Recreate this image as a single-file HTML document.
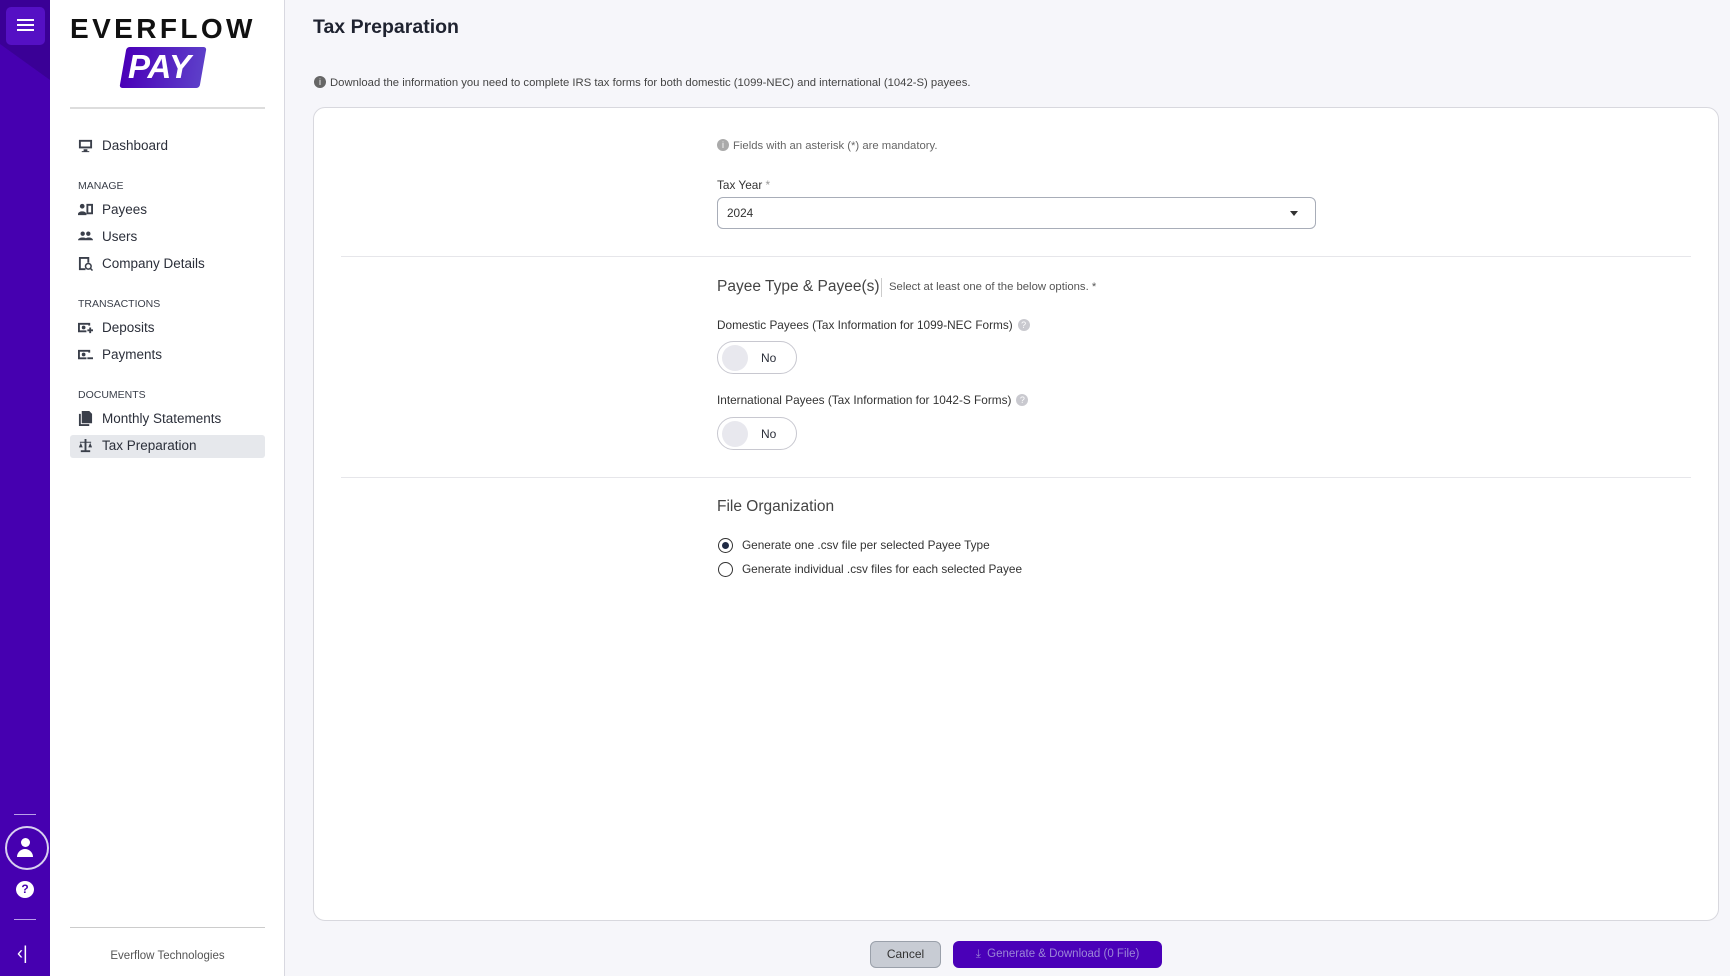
<!DOCTYPE html>
<html><head><meta charset="utf-8"><style>
*{box-sizing:border-box;margin:0;padding:0}
body{width:1730px;height:976px;overflow:hidden;background:#f6f6fa;font-family:"Liberation Sans",sans-serif;color:#2b2f3a;position:relative}
.abs{position:absolute}
.rail{left:0;top:0;width:50px;height:976px;background:#4600b0;overflow:hidden}
.side{left:50px;top:0;width:235px;height:976px;background:#fff;border-right:1px solid #d8d8e0}
.nav{position:absolute;left:52px;font-size:13.5px;color:#2b2f3a;display:flex;align-items:center}
.nav svg{width:15px;height:15px;margin-right:9px;fill:#3a3f4a}
.sec{position:absolute;left:28px;font-size:10.5px;color:#3a3f4a}
.t{font-size:11.8px;color:#333}
.tog{width:80px;height:33px;border:1px solid #c8c8d0;border-radius:17px;background:#fff}
.tog i{position:absolute;left:4px;top:3px;width:26px;height:26px;border-radius:50%;background:#e8e8ee}
.tog b{position:absolute;left:43px;top:9px;font-weight:normal;font-size:12px}
.q{display:inline-block;width:12px;height:12px;border-radius:50%;background:#c9c9cf;color:#fff;font-size:9px;text-align:center;line-height:12px;margin-left:5px;vertical-align:1px}
</style></head><body>
<div class="abs rail">
 <div class="abs" style="left:0;top:0;width:50px;height:80px;background:#3a0096;clip-path:polygon(0 0,100% 0,100% 100%,0 55%)"></div>
 <div class="abs" style="left:6px;top:7px;width:39px;height:38px;background:#5510c4;border-radius:5px"></div>
 <div class="abs" style="left:17px;top:19px;width:17px;height:2px;background:#fff;box-shadow:0 5px 0 #fff,0 10px 0 #fff"></div>
 <div class="abs" style="left:14px;top:814px;width:22px;height:1px;background:#b9a0e8"></div>
 <div class="abs" style="left:5px;top:826px;width:44px;height:44px;border:2px solid #d8d0f0;border-radius:50%"></div>
 <div class="abs" style="left:21px;top:838px;width:9px;height:9px;border-radius:50%;background:#fff"></div>
 <div class="abs" style="left:17px;top:849px;width:16px;height:8px;border-radius:8px 8px 0 0;background:#fff"></div>
 <div class="abs" style="left:16px;top:881px;width:18px;height:17px;border-radius:50%;background:#fff;color:#4600b0;font-size:12px;font-weight:bold;text-align:center;line-height:17px">?</div>
 <div class="abs" style="left:14px;top:919px;width:22px;height:1px;background:#b9a0e8"></div>
 <div class="abs" style="left:17px;top:944px;color:#fff;font-size:18px;line-height:18px">‹|</div>
</div>
<div class="abs side">
 <div class="abs" style="left:20px;top:13px;width:200px;font-size:28px;font-weight:900;letter-spacing:3.4px;color:#111;white-space:nowrap">EVERFLOW</div>
 <div class="abs" style="left:73px;top:47px;width:80px;height:41px;background:linear-gradient(90deg,#4a00b8,#5d3fc9);transform:skewX(-10deg);border-radius:3px"></div>
 <div class="abs" style="left:78px;top:48px;font-size:33px;font-weight:bold;font-style:italic;color:#fff">PAY</div>
 <div class="abs" style="left:20px;top:107px;width:195px;height:2px;background:#ddd"></div>
 <div class="nav" style="left:28px;top:138px"><svg viewBox="0 0 16 16"><path d="M1 2h14v9H1zM3 4v5h10V4zM6 12h4v2h2v1H4v-1h2z"/></svg>Dashboard</div>
 <div class="sec" style="top:180px">MANAGE</div>
 <div class="nav" style="left:28px;top:202px"><svg viewBox="0 0 16 16"><circle cx="4.5" cy="4.5" r="2.5"/><path d="M0 13c0-4 9-4 9 0v1H0zM9 2h7v11H9zM11 4v7h3V4z"/></svg>Payees</div>
 <div class="nav" style="left:28px;top:229px"><svg viewBox="0 0 16 16"><circle cx="5" cy="5" r="2.3"/><circle cx="11" cy="5" r="2.3"/><path d="M0 12c0-4 10-4 10 0zM7 12c0-4 9-4 9 0z"/></svg>Users</div>
 <div class="nav" style="left:28px;top:256px"><svg viewBox="0 0 16 16"><path d="M1 1h11v6h-2V3H3v10h5v2H1z"/><circle cx="11" cy="11" r="3" fill="none" stroke="#3a3f4a" stroke-width="1.6"/><path d="M13 13l2.5 2.5" stroke="#3a3f4a" stroke-width="1.6"/></svg>Company Details</div>
 <div class="sec" style="top:298px">TRANSACTIONS</div>
 <div class="nav" style="left:28px;top:320px"><svg viewBox="0 0 16 16"><path d="M0 3h13v3h-2V5H2v6h7v2H0z"/><circle cx="6" cy="8" r="2"/><path d="M12 8h2v2h2v2h-2v2h-2v-2h-2v-2h2z"/></svg>Deposits</div>
 <div class="nav" style="left:28px;top:347px"><svg viewBox="0 0 16 16"><path d="M0 3h13v3h-2V5H2v6h7v2H0z"/><circle cx="6" cy="8" r="2"/><path d="M10 11h6v2h-6z"/></svg>Payments</div>
 <div class="sec" style="top:389px">DOCUMENTS</div>
 <div class="nav" style="left:28px;top:411px"><svg viewBox="0 0 16 16"><path d="M4 0h8l3 3v10H4zM6 5h7v1H6zM6 8h7v1H6zM6 11h5v1H6zM1 3h2v11h9v2H1z"/></svg>Monthly Statements</div>
 <div class="abs" style="left:20px;top:435px;width:195px;height:23px;background:#e6e8ec;border-radius:3px"></div>
 <div class="nav" style="left:28px;top:438px"><svg viewBox="0 0 16 16"><path d="M7 1h2v12h4v2H3v-2h4zM2 4h12v1H2zM3 5L1 10h4zM13 5l-2 5h4z"/></svg>Tax Preparation</div>
 <div class="abs" style="left:20px;top:927px;width:195px;height:1px;background:#ccc"></div>
 <div class="abs" style="left:0;top:950px;width:235px;text-align:center;font-size:11.5px;color:#555">Everflow Technologies</div>
</div>
<div class="abs" style="left:313px;top:16px;font-size:19.5px;font-weight:bold;color:#1f2330">Tax Preparation</div>
<div class="abs" style="left:314px;top:76px;font-size:11.3px;color:#444"><span class="q" style="background:#666;margin:0 4px 0 0">i</span>Download the information you need to complete IRS tax forms for both domestic (1099-NEC) and international (1042-S) payees.</div>
<div class="abs" style="left:313px;top:107px;width:1406px;height:814px;background:#fff;border:1px solid #d8d8de;border-radius:12px"></div>
<div class="abs t" style="left:717px;top:139px;color:#666;font-size:11.3px"><span class="q" style="margin:0 4px 0 0;background:#aaa">i</span>Fields with an asterisk (*) are mandatory.</div>
<div class="abs t" style="left:717px;top:178px">Tax Year <span style="color:#999">*</span></div>
<div class="abs" style="left:717px;top:197px;width:599px;height:32px;border:1px solid #a8adb8;border-radius:6px"></div>
<div class="abs t" style="left:727px;top:206px">2024</div>
<div class="abs" style="left:1290px;top:211px;border:4px solid transparent;border-top:5px solid #333"></div>
<div class="abs" style="left:341px;top:256px;width:1350px;height:1px;background:#e6e6ea"></div>
<div class="abs" style="left:717px;top:278px;font-size:15.5px;color:#444">Payee Type &amp; Payee(s)</div>
<div class="abs" style="left:881px;top:278px;width:1px;height:19px;background:#ccc"></div>
<div class="abs" style="left:889px;top:281px;font-size:11.3px;color:#555">Select at least one of the below options. *</div>
<div class="abs t" style="left:717px;top:318px">Domestic Payees (Tax Information for 1099-NEC Forms)<span class="q">?</span></div>
<div class="abs tog" style="left:717px;top:341px"><i></i><b>No</b></div>
<div class="abs t" style="left:717px;top:393px">International Payees (Tax Information for 1042-S Forms)<span class="q">?</span></div>
<div class="abs tog" style="left:717px;top:417px"><i></i><b>No</b></div>
<div class="abs" style="left:341px;top:477px;width:1350px;height:1px;background:#e6e6ea"></div>
<div class="abs" style="left:717px;top:498px;font-size:15.5px;color:#444">File Organization</div>
<div class="abs" style="left:718px;top:538px;width:15px;height:15px;border:1.5px solid #333;border-radius:50%"></div>
<div class="abs" style="left:722px;top:542px;width:7px;height:7px;background:#1f2a44;border-radius:50%"></div>
<div class="abs t" style="left:742px;top:538px">Generate one .csv file per selected Payee Type</div>
<div class="abs" style="left:718px;top:562px;width:15px;height:15px;border:1.5px solid #333;border-radius:50%"></div>
<div class="abs t" style="left:742px;top:562px">Generate individual .csv files for each selected Payee</div>
<div class="abs" style="left:870px;top:941px;width:71px;height:27px;background:#c8ccd4;border:1px solid #9aa0aa;border-radius:6px;text-align:center;line-height:25px;font-size:12px;color:#333">Cancel</div>
<div class="abs" style="left:953px;top:941px;width:209px;height:27px;background:#4a00b8;border-radius:6px;text-align:center;line-height:27px;font-size:11.5px;color:#9c86d8">⤓ &nbsp;Generate &amp; Download (0 File)</div>
</body></html>
